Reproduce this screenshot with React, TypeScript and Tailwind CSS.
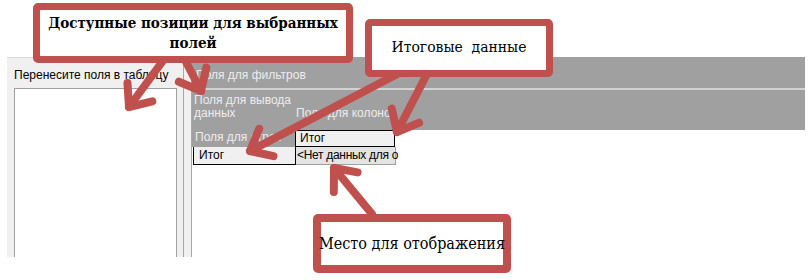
import React from 'react'

const RED = '#c0504d'

// points for an open chevron arrow head, tail -> tip
function arrowHead(x1: number, y1: number, x2: number, y2: number, len = 24, deg = 40) {
  const a = Math.atan2(y1 - y2, x1 - x2)
  const r = (deg * Math.PI) / 180
  const p1 = [x2 + len * Math.cos(a + r), y2 + len * Math.sin(a + r)]
  const p2 = [x2 + len * Math.cos(a - r), y2 + len * Math.sin(a - r)]
  return `${p1[0]},${p1[1]} ${x2},${y2} ${p2[0]},${p2[1]}`
}

const arrows = [
  { x1: 165, y1: 58, x2: 129, y2: 107 },
  { x1: 184, y1: 58, x2: 201, y2: 91 },
  { x1: 405, y1: 70, x2: 250, y2: 151 },
  { x1: 428, y1: 72, x2: 397, y2: 132 },
  { x1: 372, y1: 214, x2: 334, y2: 168 },
]

export default function App() {
  return (
    <div className="relative w-[809px] h-[280px] bg-white overflow-hidden [font-family:'Liberation_Sans',Arial,sans-serif] text-[12px]">
      {/* pivot table screenshot */}
      <div className="ml-[7px] mt-[57px] w-[798px] h-[200px] flex">
        {/* field list */}
        <div className="w-[176px] bg-[#f0f0f0] border-t border-[#dcdcdc] flex flex-col pl-[7px] pr-[6px]">
          <div className="h-[30px] pt-[10px] leading-[14px] text-black whitespace-nowrap">Перенесите поля в таблицу</div>
          <div className="flex-1 bg-white border border-[#a0a0a0] border-b-0"></div>
        </div>
        <div className="w-[9px] bg-[#f0f0f0] border-l border-r border-[#a8a8a8]"></div>

        {/* drop zones */}
        <div className="flex-1 flex flex-col bg-white">
          <div className="h-[33px] bg-[#a0a0a0] pl-[4px] pt-[11px] leading-[14px] text-[#ededed] border-b-2 border-[#d2d2d2]">
            Поля для фильтров
          </div>
          <div className="h-[40px] bg-[#a0a0a0] flex text-[#ededed] leading-[13px]">
            <div className="w-[103px] pl-[2px] pt-[4px] whitespace-nowrap">Поля для вывода<br />данных</div>
            <div className="pt-[17px] pl-[1px] whitespace-nowrap">Поля для колонок</div>
          </div>
          <div className="flex">
            <div className="w-[103px] h-[17px] bg-[#a0a0a0] text-[#ededed] pl-[3px] leading-[14px] whitespace-nowrap">Поля для строк</div>
            <div className="w-[100px] h-[17px] bg-[#f0f0f0] border border-black pl-[4px] leading-[15px]">Итог</div>
          </div>
          <div className="flex">
            <div className="w-[103px] h-[18px] bg-[#f0f0f0] border border-black border-t-0 ml-[1px] pl-[5px] leading-[17px]">Итог</div>
            <div className="w-[100px] h-[18px] bg-[#e4e4e4] border border-[#a0a0a0] border-t-0 border-l-0 pl-[1px] leading-[17px] whitespace-nowrap tracking-[-0.3px]">&lt;Нет данных для о</div>
          </div>
        </div>
      </div>

      {/* arrows */}
      <svg className="absolute left-0 top-0" width="809" height="280">
        {arrows.map((a, i) => (
          <g key={i} stroke={RED} strokeWidth="8" strokeLinecap="round" strokeLinejoin="round" fill="none">
            <line x1={a.x1} y1={a.y1} x2={a.x2} y2={a.y2} />
            <polyline points={arrowHead(a.x1, a.y1, a.x2, a.y2)} />
          </g>
        ))}
      </svg>

      {/* callouts */}
      <div className="absolute left-[33px] top-[3px] w-[320px] h-[60px] border-[7px] border-[#c0504d] rounded-[5px] bg-white flex flex-col items-center justify-center text-center [font-family:'DejaVu_Serif_Condensed','DejaVu_Serif',serif] font-stretch-condensed font-bold text-[15px] leading-[20px] text-black whitespace-nowrap">
        <span>Доступные позиции для выбранных</span>
        <span>полей</span>
      </div>
      <div className="absolute left-[365px] top-[19px] w-[188px] h-[58px] border-[7px] border-[#c0504d] rounded-[5px] bg-white flex items-center justify-center [font-family:'DejaVu_Serif_Condensed','DejaVu_Serif',serif] font-stretch-condensed text-[15.5px] text-black whitespace-pre">
        Итоговые  данные
      </div>
      <div className="absolute left-[313px] top-[214px] w-[198px] h-[59px] border-[8px] border-[#c0504d] rounded-[5px] bg-white flex items-center justify-center [font-family:'DejaVu_Serif_Condensed','DejaVu_Serif',serif] font-stretch-condensed text-[16px] text-black whitespace-nowrap">
        Место для отображения
      </div>
    </div>
  )
}
